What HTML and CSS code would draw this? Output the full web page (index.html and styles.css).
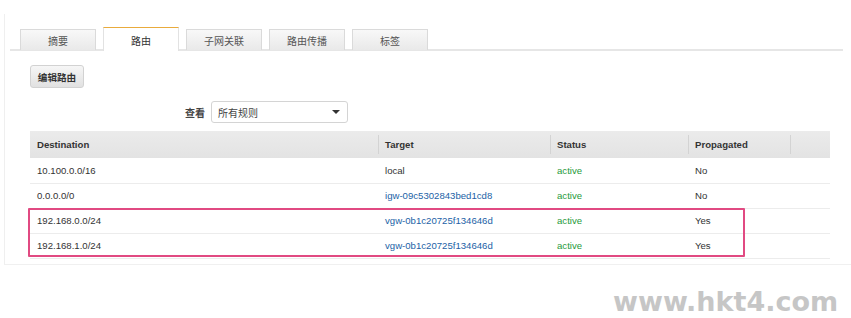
FILE: index.html
```html
<!DOCTYPE html>
<html>
  <head>
    <title>路由表</title>
    <meta charset="UTF-8">
    <meta name="viewport" content="width=device-width, initial-scale=1.0">
    <link rel="stylesheet" href="styles.css">
  </head>
  <body>
    <div class="panel">
      <div class="tabs">
        <a class="tab">摘要</a>
        <a class="tab active">路由</a>
        <a class="tab">子网关联</a>
        <a class="tab">路由传播</a>
        <a class="tab">标签</a>
      </div>

      <div class="content">
        <button class="btn">编辑路由</button>

        <div class="filter">
          <label for="ruleFilter">查看</label>
          <div class="select" id="ruleFilter">
            <span>所有规则</span>
            <span class="caret"></span>
          </div>
        </div>

        <div class="tableWrap">
          <table class="routes">
            <thead>
              <tr>
                <th class="colDest">Destination</th>
                <th class="colTarget">Target</th>
                <th class="colStatus">Status</th>
                <th class="colProp">Propagated</th>
                <th class="colRest"></th>
              </tr>
            </thead>
            <tbody>
              <tr>
                <td>10.100.0.0/16</td>
                <td>local</td>
                <td class="ok">active</td>
                <td>No</td>
                <td></td>
              </tr>
              <tr>
                <td>0.0.0.0/0</td>
                <td><a class="link">igw-09c5302843bed1cd8</a></td>
                <td class="ok">active</td>
                <td>No</td>
                <td></td>
              </tr>
              <tr>
                <td>192.168.0.0/24</td>
                <td><a class="link">vgw-0b1c20725f134646d</a></td>
                <td class="ok">active</td>
                <td>Yes</td>
                <td></td>
              </tr>
              <tr>
                <td>192.168.1.0/24</td>
                <td><a class="link">vgw-0b1c20725f134646d</a></td>
                <td class="ok">active</td>
                <td>Yes</td>
                <td></td>
              </tr>
            </tbody>
          </table>
          <!-- highlight box drawn over the two vgw rows -->
          <div class="highlight"></div>
        </div>
      </div>
    </div>

    <div class="watermark">www.hkt4.com</div>
  </body>
</html>
```

FILE: styles.css
```css
* {
  box-sizing: border-box;
}
body {
  font-family: "Liberation Sans", Arial, "Noto Sans CJK SC", sans-serif;
  margin: 0;
  background: #fff;
  color: #333;
  font-size: 9.6px;
}
.panel {
  margin: 14px 0 0 4px;
  height: 251px;
  border-left: 1px solid #efefef;
  border-bottom: 1px solid #f0f0f0;
}

/* tab strip */
.tabs {
  display: flex;
  align-items: flex-end;
  gap: 7px;
  margin: 0 8px 0 5px;
  padding: 13px 0 0 10px;
  border-bottom: 2px solid #e6e6e6;
}
.tab {
  width: 76px;
  height: 21px;
  margin-bottom: -1px;
  display: flex;
  align-items: center;
  justify-content: center;
  font-size: 10px;
  color: #555;
  background: linear-gradient(#f8f8f8, #e9e9e9);
  border: 1px solid #dadada;
  border-bottom: none;
}
.tab.active {
  height: 24px;
  margin-bottom: -2px;
  padding-top: 2px;
  background: #fff;
  color: #333;
  border-color: #e2e2e2;
  border-top: 1px solid #e9ab3c;
}

.content {
  padding: 14px 0 0 25px;
}
.btn {
  display: block;
  width: 54px;
  height: 23px;
  padding: 0;
  font-family: inherit;
  font-size: 9.6px;
  font-weight: bold;
  color: #333;
  background: linear-gradient(#f6f6f6, #e1e1e1);
  border: 1px solid #d2d2d2;
  border-radius: 3px;
}

.filter {
  display: flex;
  align-items: center;
  gap: 6px;
  margin: 13px 0 0 155px;
}
.filter label {
  font-weight: bold;
  font-size: 10px;
  color: #444;
}
.select {
  width: 137px;
  height: 22px;
  display: flex;
  align-items: center;
  justify-content: space-between;
  padding: 0 7px 0 6px;
  border: 1px solid #d4d4d4;
  border-radius: 3px;
  font-size: 10px;
  color: #444;
}
.caret {
  width: 0;
  height: 0;
  border-left: 4px solid transparent;
  border-right: 4px solid transparent;
  border-top: 4px solid #333;
}

/* route table */
.tableWrap {
  position: relative;
  width: 800px;
  margin-top: 8px;
}
.routes {
  width: 800px;
  border-collapse: collapse;
  table-layout: fixed;
}
.routes th {
  height: 27px;
  padding: 0 7px;
  text-align: left;
  font-weight: bold;
  color: #333;
  background: linear-gradient(#ebebeb, #e3e3e3);
  position: relative;
}
.routes th + th::before {
  content: "";
  position: absolute;
  left: 0;
  top: 4px;
  bottom: 4px;
  border-left: 1px solid #d3d3d3;
}
.routes td {
  height: 25px;
  padding: 0 7px;
  color: #333;
  border-bottom: 1px solid #ececec;
  white-space: nowrap;
}
.colDest { width: 348px; }
.colTarget { width: 172px; }
.colStatus { width: 138px; }
.colProp { width: 102px; }
.colRest { width: 40px; }
.routes .ok {
  color: #1f9a3c;
}
.link {
  color: #2262a6;
  text-decoration: none;
}
.highlight {
  position: absolute;
  left: -2px;
  top: 77px;
  width: 717px;
  height: 49px;
  border: 2px solid #e14a82;
  border-radius: 1px;
}

.watermark {
  position: absolute;
  left: 613px;
  top: 286px;
  font-family: "DejaVu Sans", Verdana, sans-serif;
  font-weight: bold;
  font-size: 27px;
  color: #c6c6c6;
}
```
